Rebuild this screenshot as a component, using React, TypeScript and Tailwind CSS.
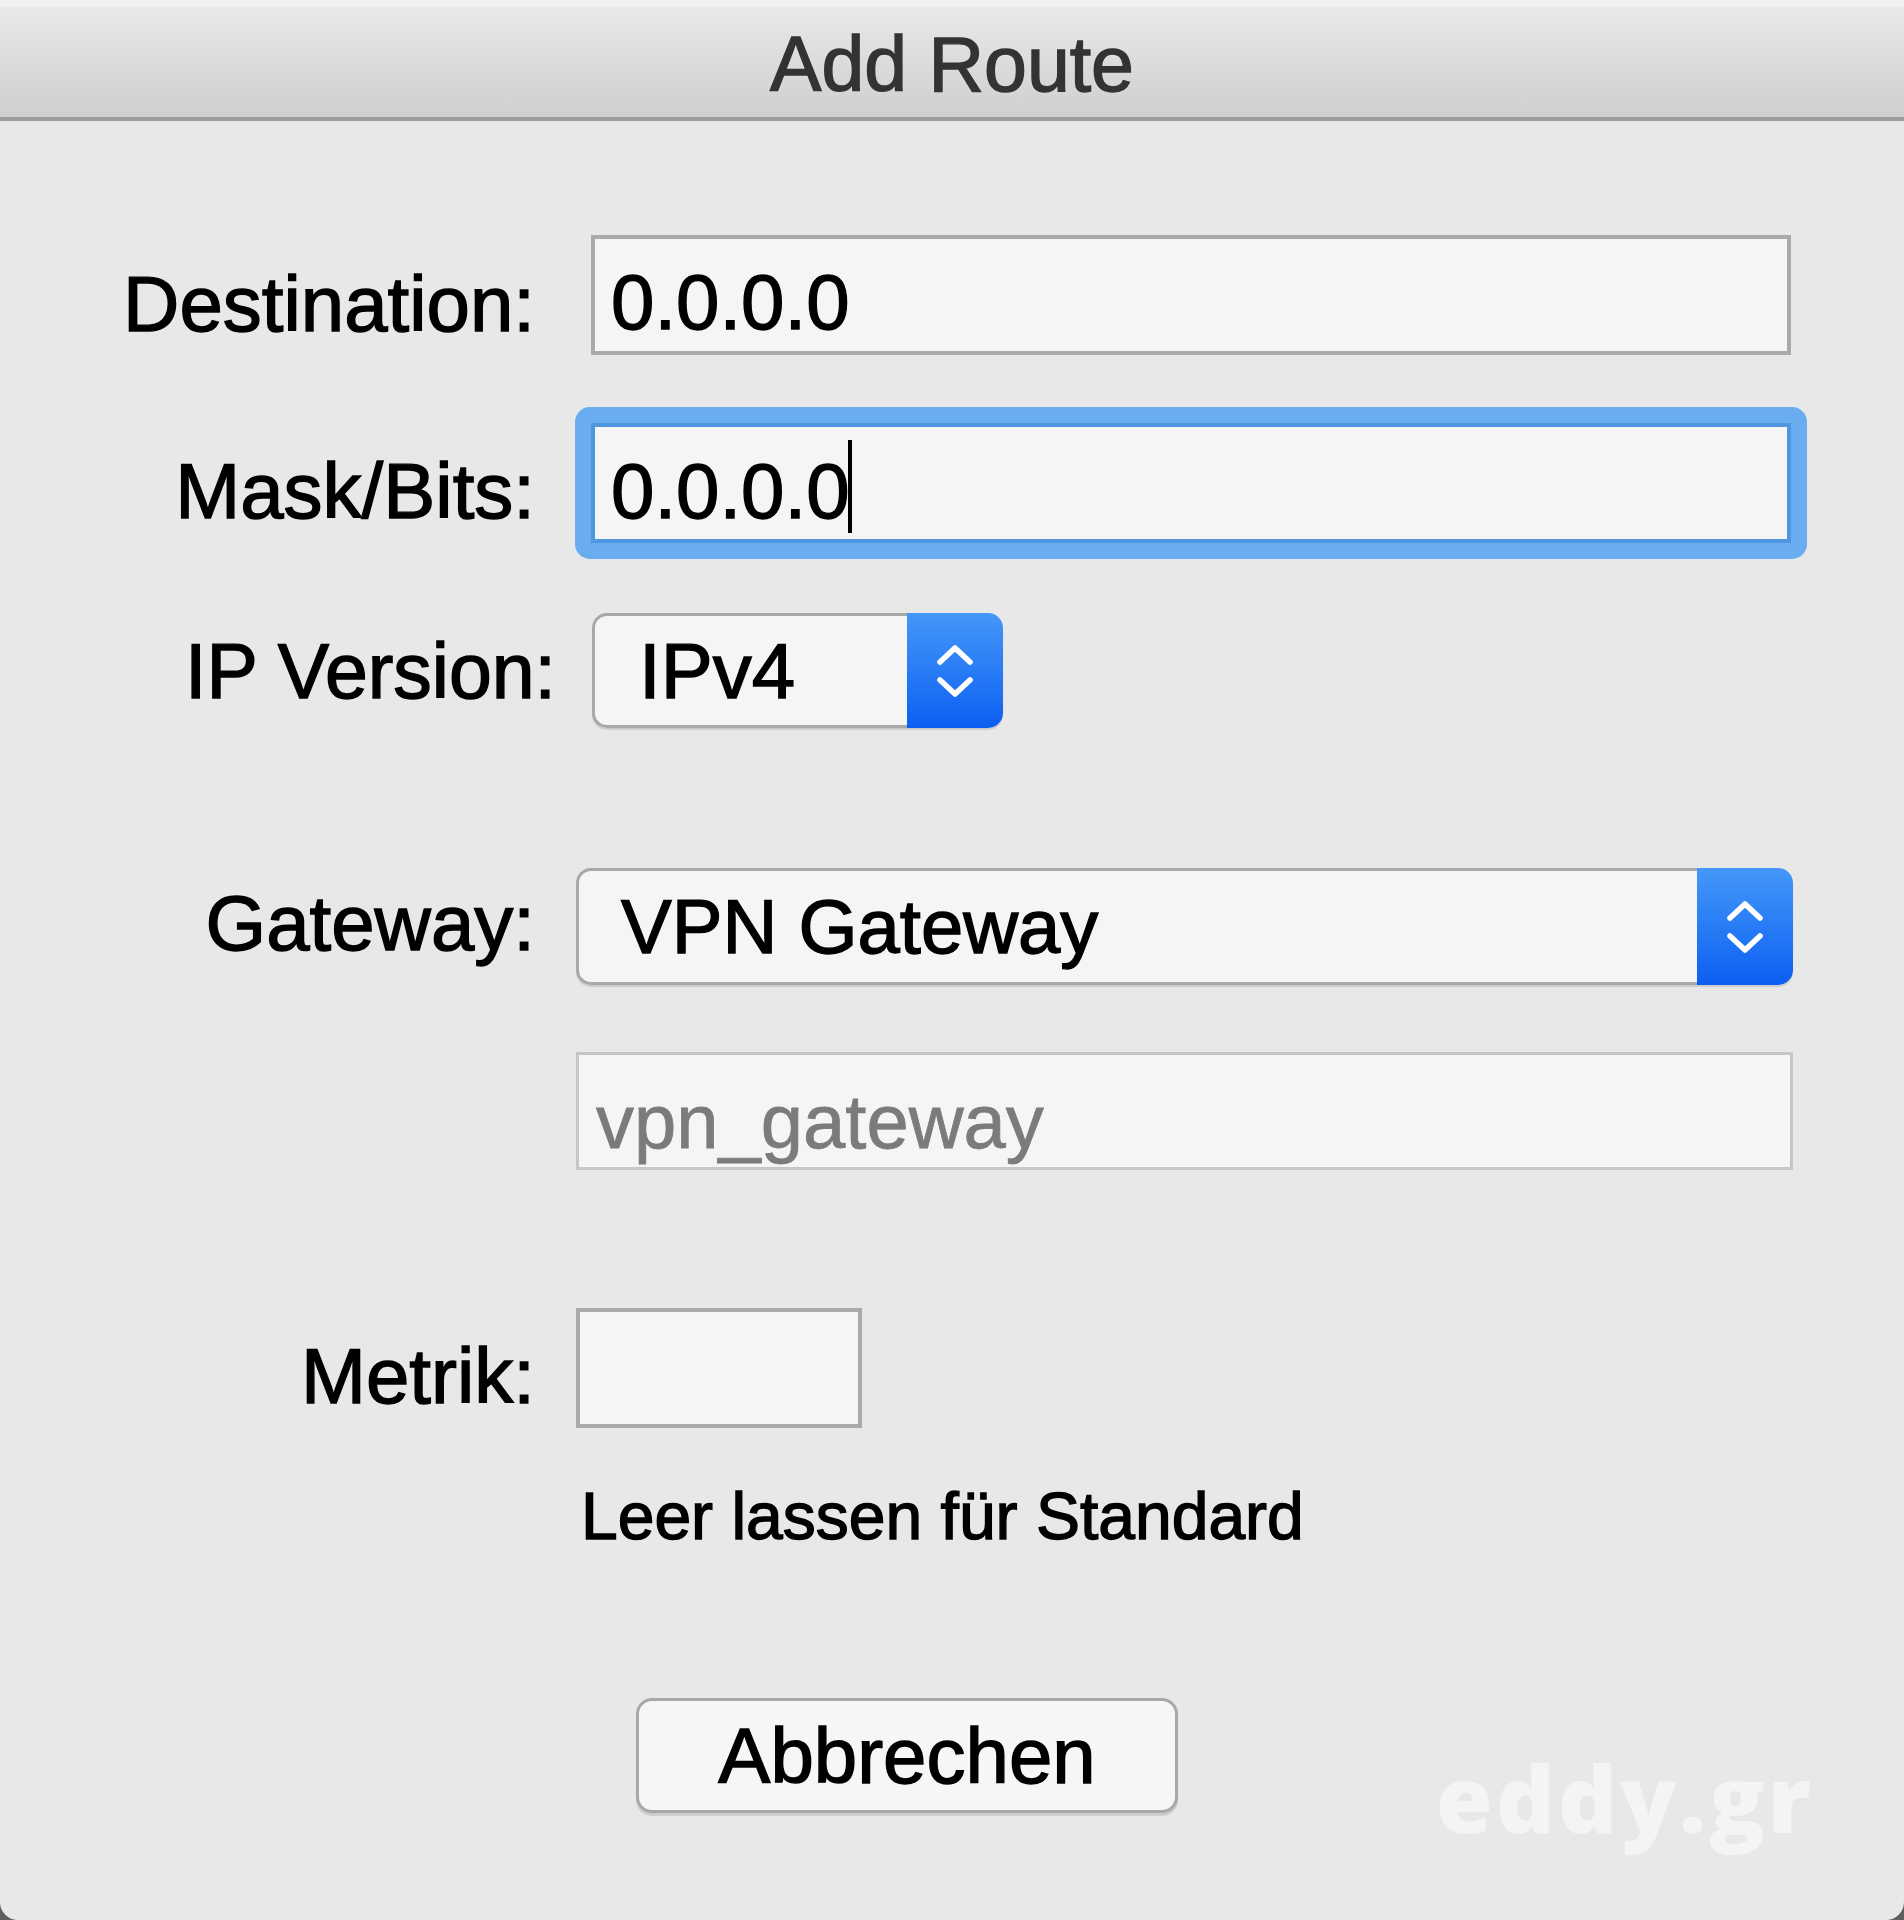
import React from "react";

function Chevrons() {
  return (
    <svg width="42" height="60" viewBox="0 0 42 60" fill="none" stroke="#ffffff" strokeWidth="5.5" strokeLinecap="round" strokeLinejoin="round">
      <path d="M6 21 L21 7 L36 21" />
      <path d="M6 39 L21 53 L36 39" />
    </svg>
  );
}

export default function App() {
  return (
    <div className="relative h-[1920px] w-[1904px] overflow-hidden bg-[#5e5e5e] font-['Liberation_Sans',Arial,sans-serif] text-black [-webkit-text-stroke:1.4px_currentColor]">
      <div className="flex h-full flex-col rounded-b-[18px] bg-[#e8e8e8]">
        {/* Title bar */}
        <div className="border-b-[4px] border-[#9c9c9c]">
          <div className="h-[7px] bg-[#f1f1f1]" />
          <div className="flex h-[110px] items-center justify-center bg-linear-to-b from-[#e9e9e9] to-[#cfcfcf] pt-[4px] text-[77px] leading-none text-[#333333]">
            Add Route
          </div>
        </div>

        <div className="flex flex-col pt-[114px]">
          {/* Destination */}
          <div className="flex h-[120px]">
            <div className="w-[535px] pt-[30px] text-right text-[78px] leading-none">Destination:</div>
            <div className="ml-[56px] h-[120px] w-[1200px] border-[4px] border-[#aaaaaa] bg-[#f5f5f5] pl-[16px] pt-[24px] text-[78px] leading-none">
              0.0.0.0
            </div>
          </div>

          {/* Mask/Bits */}
          <div className="mt-[52px] flex h-[152px]">
            <div className="w-[535px] pt-[45px] text-right text-[78px] leading-none">Mask/Bits:</div>
            <div className="ml-[40px] rounded-[15px] bg-[#69adf0] p-[16px]">
              <div className="flex h-[120px] w-[1200px] items-start border-[4px] border-[#4f96e0] bg-[#f5f5f5] pl-[16px] pt-[25px] text-[78px] leading-none">
                <span>0.0.0.0</span>
                <span className="-mt-[12px] -ml-[2px] inline-block h-[93px] w-[4px] bg-black" />
              </div>
            </div>
          </div>

          {/* IP Version */}
          <div className="mt-[54px] flex h-[115px]">
            <div className="w-[556px] pt-[20px] text-right text-[77px] leading-none">IP Version:</div>
            <div className="ml-[36px] flex h-[115px] w-[411px] rounded-[15px] shadow-[0_2px_1px_rgba(0,0,0,0.12)]">
              <div className="flex flex-1 items-center rounded-l-[15px] border-y-[3px] border-l-[3px] border-[#a8a8a8] bg-[#f5f5f5] pl-[44px] text-[78px] leading-none">
                IPv4
              </div>
              <div className="flex w-[96px] items-center justify-center rounded-r-[15px] bg-linear-to-b from-[#4597f8] to-[#0b5ef1]">
                <Chevrons />
              </div>
            </div>
          </div>

          {/* Gateway */}
          <div className="mt-[140px] flex h-[117px]">
            <div className="w-[535px] pt-[16px] text-right text-[78px] leading-none">Gateway:</div>
            <div className="ml-[41px] flex h-[117px] w-[1217px] rounded-[15px] shadow-[0_2px_1px_rgba(0,0,0,0.12)]">
              <div className="flex flex-1 items-center rounded-l-[15px] border-y-[3px] border-l-[3px] border-[#a8a8a8] bg-[#f5f5f5] pl-[42px] text-[76px] leading-none">
                VPN Gateway
              </div>
              <div className="flex w-[96px] items-center justify-center rounded-r-[15px] bg-linear-to-b from-[#4597f8] to-[#0b5ef1]">
                <Chevrons />
              </div>
            </div>
          </div>

          {/* vpn_gateway field */}
          <div className="mt-[67px] flex h-[118px]">
            <div className="w-[535px]" />
            <div className="ml-[41px] h-[118px] w-[1217px] border-[3px] border-[#c6c6c6] bg-[#f5f5f5] pl-[17px] pt-[29px] text-[76px] leading-none text-[#7b7b7b] [-webkit-text-stroke:0.8px_currentColor]">
              vpn_gateway
            </div>
          </div>

          {/* Metrik */}
          <div className="mt-[138px] flex h-[120px]">
            <div className="w-[535px] pt-[29px] text-right text-[78px] leading-none">Metrik:</div>
            <div className="ml-[41px] h-[120px] w-[286px] border-[4px] border-[#aaaaaa] bg-[#f5f5f5]" />
          </div>

          {/* Help text */}
          <div className="mt-[55px] pl-[581px] text-[66px] leading-none">Leer lassen für Standard</div>

          {/* Button */}
          <div className="mt-[149px] pl-[636px]">
            <div className="flex h-[115px] w-[542px] items-center justify-center rounded-[16px] border-[3px] border-[#a8a8a8] bg-[#f6f6f6] text-[78px] leading-none shadow-[0_3px_1px_rgba(0,0,0,0.12)]">
              Abbrechen
            </div>
          </div>
        </div>
      </div>

      {/* Watermark */}
      <div className="absolute left-[1436px] top-[1752px] font-['Open_Sans',sans-serif] text-[92px] font-extrabold leading-none tracking-[3px] text-[#f4f4f4] [-webkit-text-stroke:0px_transparent]">
        eddy.gr
      </div>
    </div>
  );
}
